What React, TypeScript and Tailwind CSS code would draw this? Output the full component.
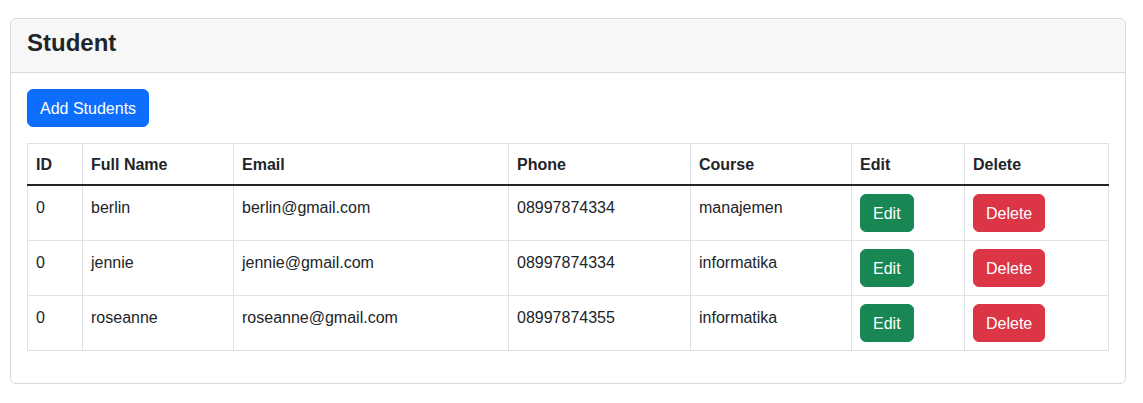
import React from "react";

const rows = [
  { id: 0, name: "berlin", email: "berlin@gmail.com", phone: "08997874334", course: "manajemen" },
  { id: 0, name: "jennie", email: "jennie@gmail.com", phone: "08997874334", course: "informatika" },
  { id: 0, name: "roseanne", email: "roseanne@gmail.com", phone: "08997874355", course: "informatika" },
];

const td = "border-x border-[#dee2e6] px-2 pt-[10px] pb-[6px] align-top";
const tdBtn = "border-x border-[#dee2e6] p-2 align-top";

export default function App() {
  return (
    <div
      className="min-h-[403px] bg-white pt-[18px] text-[#212529]"
      style={{ fontFamily: '"Liberation Sans", Arial, sans-serif' }}
    >
      <div className="ml-[10px] w-[1116px] rounded-[6px] border border-[#d9d9d9] bg-white">
        <div className="rounded-t-[5px] border-b border-[#d9d9d9] bg-[#f7f7f7] px-4 pt-[9px] pb-[15px]">
          <h4 className="text-[24px] leading-[29px] font-semibold">Student</h4>
        </div>
        <div className="p-4">
          <button className="mb-4 h-[38px] rounded-[6px] border border-[#0d6efd] bg-[#0d6efd] px-3 pt-[2px] text-[16px] leading-6 text-white">
            Add Students
          </button>
          <table className="mb-4 w-full table-fixed border-collapse border border-[#dee2e6] text-[16px] leading-6">
            <colgroup>
              <col className="w-[55px]" />
              <col className="w-[151px]" />
              <col className="w-[275px]" />
              <col className="w-[182px]" />
              <col className="w-[161px]" />
              <col className="w-[113px]" />
              <col className="w-[144px]" />
            </colgroup>
            <thead>
              <tr>
                {["ID", "Full Name", "Email", "Phone", "Course", "Edit", "Delete"].map((h) => (
                  <th key={h} className="border-x border-[#dee2e6] px-2 pt-[9px] pb-[7px] text-left align-bottom font-bold">
                    {h}
                  </th>
                ))}
              </tr>
            </thead>
            <tbody className="border-t-2 border-t-[#212529]">
              {rows.map((r, i) => (
                <tr key={i} className="border-b border-[#dee2e6]">
                  <td className={td}>{r.id}</td>
                  <td className={td}>{r.name}</td>
                  <td className={td}>{r.email}</td>
                  <td className={td}>{r.phone}</td>
                  <td className={td}>{r.course}</td>
                  <td className={tdBtn}>
                    <button className="h-[38px] rounded-[6px] border border-[#198754] bg-[#198754] px-3 pt-[2px] text-[16px] leading-6 text-white">
                      Edit
                    </button>
                  </td>
                  <td className={tdBtn}>
                    <button className="h-[38px] rounded-[6px] border border-[#dc3545] bg-[#dc3545] px-3 pt-[2px] text-[16px] leading-6 text-white">
                      Delete
                    </button>
                  </td>
                </tr>
              ))}
            </tbody>
          </table>
        </div>
      </div>
    </div>
  );
}
